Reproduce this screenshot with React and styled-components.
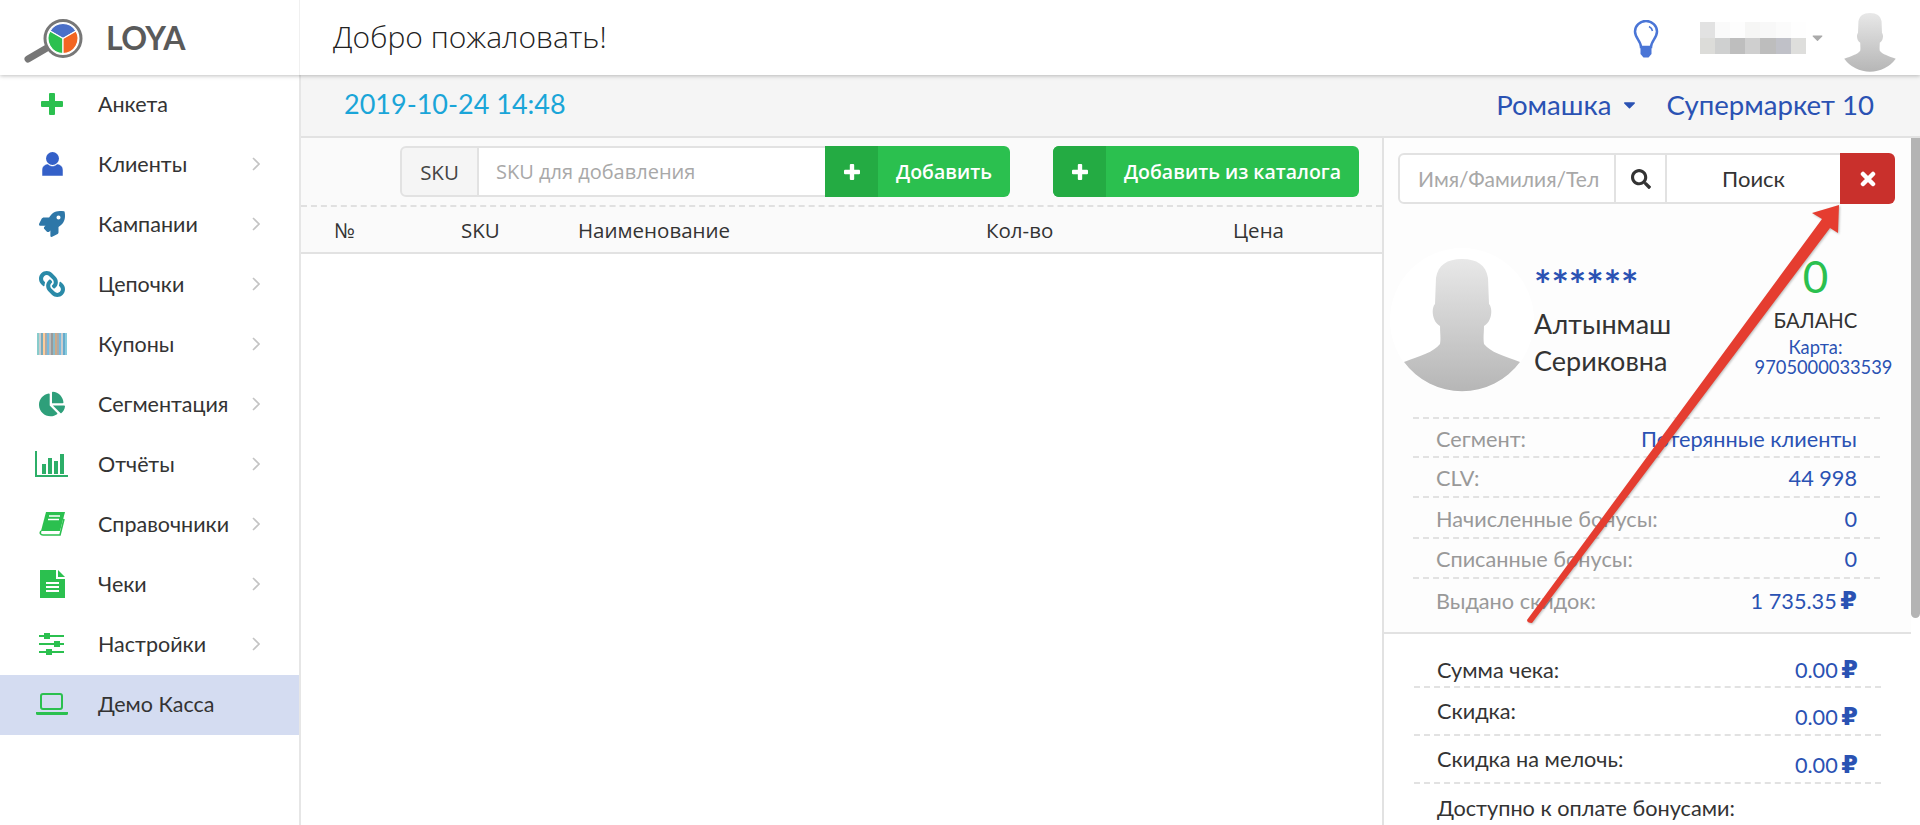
import styled, { createGlobalStyle } from 'styled-components'
import { FaRocket, FaLink, FaChartPie, FaSearch, FaCaretDown } from 'react-icons/fa'

const GlobalStyle = createGlobalStyle`
  html, body { margin: 0; padding: 0; height: 100%; background: #fff; }
  * { box-sizing: border-box; }
  body { font-family: Lato, "Noto Sans", sans-serif; color: #333; overflow: hidden; }
`

const Page = styled.div`
  position: relative;
  width: 1920px;
  height: 825px;
  overflow: hidden;
  display: flex;
  flex-direction: column;
`
const TopBar = styled.header`
  height: 75px;
  flex: none;
  display: flex;
  align-items: center;
  background: #fff;
  box-shadow: 0 1px 4px rgba(0,0,0,.25);
  position: relative;
  z-index: 2;
`
const LogoBox = styled.div`
  width: 300px;
  height: 100%;
  display: flex;
  align-items: center;
  padding-left: 24px;
  border-right: 1px solid #f0f0f0;
`
const LogoText = styled.span`
  margin-left: 22px;
  font-size: 32px;
  font-weight: 700;
  color: #5a5a5a;
  letter-spacing: -0.5px;
`
const Welcome = styled.h1`
  margin: 0 0 3px 33px;
  font: 300 30px "Open Sans", sans-serif;
  color: #222;
  flex: 1;
`
const Bulb = styled.svg`
  width: 26px;
  height: 38px;
  margin: 2px 41px 0 0;
`
const BlurName = styled.div`
  display: grid;
  grid-template-columns: repeat(7, 15.2px);
  grid-auto-rows: 16px;
`
const Pixel = styled.span`
  background: ${p => p.$c};
`
const UserCaret = styled(FaCaretDown)`
  color: #aaa;
  font-size: 17px;
  margin: 0 12px 0 3px;
`
const SmallAvatar = styled.svg`
  width: 64px;
  height: 64px;
  margin-right: 18px;
  margin-top: 4px;
`
const Body = styled.div`
  flex: 1;
  display: flex;
  min-height: 0;
`
const Sidebar = styled.nav`
  width: 301px;
  flex: none;
  border-right: 2px solid #e6e6e6;
  background: #fff;
`
const MenuItem = styled.div`
  height: 60px;
  display: flex;
  align-items: center;
  padding: 0 39px 2px 22px;
  font-size: 21.5px;
  color: #333;
  background: ${p => (p.$active ? '#d4dcf1' : 'transparent')};
`
const MenuIcon = styled.span`
  width: 60px;
  margin-right: 16px;
  display: flex;
  align-items: center;
  justify-content: center;
  color: ${p => p.$c};
  font-size: 26px;
`
const FlippedLink = styled(FaLink)`
  transform: scaleX(-1);
`
const Chevron = styled.svg`
  margin-left: auto;
  width: 8px;
  height: 14px;
  fill: none;
  stroke: #c4c4c4;
  stroke-width: 1.6;
`
const Main = styled.main`
  flex: 1;
  min-width: 0;
  display: flex;
  flex-direction: column;
`
const SubBar = styled.div`
  height: 63px;
  flex: none;
  display: flex;
  align-items: center;
  background: #f5f5f5;
  border-bottom: 2px solid #e2e2e2;
  padding: 0 46px 0 43px;
`
const DateText = styled.span`
  font-size: 27px;
  color: #1aa5d8;
  flex: 1;
  margin-bottom: 5px;
`
const ShopLink = styled.span`
  font-size: 27.6px;
  color: #2a52b3;
  display: flex;
  align-items: center;
  margin-left: ${p => p.$gap || 0}px;
  margin-bottom: 2px;
`
const ShopCaret = styled(FaCaretDown)`
  font-size: 19px;
  margin-left: 8px;
`
const Work = styled.div`
  flex: 1;
  min-height: 0;
  display: flex;
`
const Left = styled.section`
  width: 1081px;
  flex: none;
`
const Toolbar = styled.div`
  height: 69px;
  background: #fafafa;
  display: flex;
  align-items: flex-start;
  padding: 8px 0 0 99px;
  border-bottom: 2px dashed #e0e0e0;
`
const InputGroup = styled.div`
  display: flex;
  height: 51px;
`
const Addon = styled.div`
  width: 79px;
  display: flex;
  align-items: center;
  justify-content: center;
  background: #f5f5f5;
  border: 2px solid #e2e2e2;
  border-radius: 6px 0 0 6px;
  font: 400 20.5px "Open Sans", sans-serif;
  color: #444;
`
const SkuInput = styled.div`
  width: 346px;
  display: flex;
  align-items: center;
  padding-left: 17px;
  background: #fff;
  border-top: 2px solid #e2e2e2;
  border-bottom: 2px solid #e2e2e2;
  font: 400 20px "Open Sans", sans-serif;
  color: #a8a8a8;
`
const GreenBtn = styled.div`
  display: flex;
  height: 51px;
  width: ${p => p.$w}px;
  margin-left: ${p => p.$gap || 0}px;
  background: #2bc04f;
  color: #fff;
  font: 600 19.5px "Open Sans", sans-serif;
  border-radius: ${p => (p.$joined ? '0 6px 6px 0' : '6px')};
  overflow: hidden;
`
const BtnIcon = styled.span`
  width: 53px;
  background: #24ab43;
  display: flex;
  align-items: center;
  justify-content: center;
`
const BtnLabel = styled.span`
  flex: 1;
  display: flex;
  align-items: center;
  justify-content: center;
`
const TableHead = styled.div`
  height: 47px;
  background: #fafafa;
  border-bottom: 2px solid #e2e2e2;
  display: grid;
  grid-template-columns: 127px 117px 408px 247px 1fr;
  align-items: center;
  padding-left: 33px;
  font: 400 20.5px "Open Sans", sans-serif;
  color: #333;
`
const Right = styled.aside`
  flex: 1;
  min-width: 0;
  display: flex;
  border-left: 2px solid #e2e2e2;
`
const RightInner = styled.div`
  flex: 1;
  min-width: 0;
`
const Thumb = styled.div`
  width: 9px;
  height: 480px;
  flex: none;
  background: #b4b4b4;
  border-radius: 0 0 5px 5px;
`
const UpperPanel = styled.div`
  background: #fdfdfd;
  padding: 15px 16px 0 14px;
  height: 496px;
  border-bottom: 2px solid #e2e2e2;
`
const SearchRow = styled.div`
  display: flex;
  height: 51px;
`
const SearchInput = styled.div`
  width: 218px;
  display: flex;
  align-items: center;
  padding-left: 18px;
  border: 2px solid #e2e2e2;
  border-radius: 6px 0 0 6px;
  background: #fff;
  font-size: 21px;
  color: #a8a8a8;
  white-space: nowrap;
  overflow: hidden;
`
const SearchIconCell = styled.div`
  width: 51px;
  display: flex;
  align-items: center;
  justify-content: center;
  border: 2px solid #e2e2e2;
  border-left: 0;
  background: #fff;
  font-size: 20px;
  color: #333;
`
const SearchBtn = styled.div`
  width: 173px;
  display: flex;
  align-items: center;
  justify-content: center;
  border: 2px solid #e2e2e2;
  border-left: 0;
  border-right: 0;
  background: #fff;
  font-size: 22px;
  color: #333;
`
const CloseBtn = styled.div`
  width: 55px;
  display: flex;
  align-items: center;
  justify-content: center;
  background: #c9302c;
  color: #fff;
  border-radius: 0 6px 6px 0;
`
const Profile = styled.div`
  display: flex;
  margin: 44px 0 0 -8px;
  height: 169px;
`
const AvatarBig = styled.svg`
  width: 144px;
  height: 144px;
  flex: none;
`
const ProfileText = styled.div`
  width: 202px;
  padding-top: 16px;
`
const Stars = styled.div`
  font-size: 41px;
  line-height: 41px;
  font-weight: 700;
  color: #2a52b3;
  height: 41px;
`
const FullName = styled.div`
  font-size: 27px;
  line-height: 37px;
  color: #333;
`
const Balance = styled.div`
  flex: 1;
  display: flex;
  flex-direction: column;
  align-items: center;
  white-space: nowrap;
`
const BalanceValue = styled.div`
  font-size: 44px;
  line-height: 50px;
  color: #2bc04f;
  margin-top: 3px;
`
const BalanceLabel = styled.div`
  font-size: 20.3px;
  line-height: 30px;
  margin-top: 4px;
`
const CardText = styled.div`
  font-size: 18.3px;
  line-height: 19.5px;
  color: #2a52b3;
  text-align: center;
  margin-top: 3px;
`
const CardNumber = styled.span`
  display: block;
  padding-left: 16px;
`
const InfoRows = styled.div`
  margin: 0 ${p => p.$side}px;
`
const InfoRow = styled.div`
  height: ${p => p.$h || 40.5}px;
  display: flex;
  justify-content: space-between;
  align-items: center;
  padding: ${p => p.$pad ?? 3}px 23px 0 23px;
  border-top: ${p => (p.$first ? '2px dashed #e2e2e2' : '0')};
  border-bottom: ${p => (p.$last ? '0' : '2px dashed #e2e2e2')};
  font-size: 21.7px;
  color: ${p => (p.$dark ? '#333' : '#999')};
`
const Value = styled.span`
  color: #2a52b3;
  padding-top: ${p => p.$pt || 0}px;
`
const Ruble = styled.span`
  font-family: "DejaVu Sans", sans-serif;
  font-weight: 700;
  font-size: 24px;
  line-height: 1;
  margin-left: -2px;
`
const LowerPanel = styled.div`
  background: #fff;
  padding-top: 16px;
`
const Arrow = styled.svg`
  position: absolute;
  left: 0;
  top: 0;
  width: 1920px;
  height: 825px;
  pointer-events: none;
  z-index: 3;
  filter: drop-shadow(1px 1px 1px rgba(0,0,0,.25));
`

function PlusIcon({ size = 16, thick = 6 }) {
  const a = (size - (size * thick) / 22) / 2
  const w = (size * thick) / 22
  return (
    <svg width={size} height={size} viewBox={`0 0 ${size} ${size}`} fill="currentColor">
      <rect x={a} y="0" width={w} height={size} rx="1" />
      <rect x="0" y={a} width={size} height={w} rx="1" />
    </svg>
  )
}

const menu = [
  { label: 'Анкета', c: '#2bc04f', icon: <PlusIcon size={22} />, noArrow: true },
  {
    label: 'Клиенты',
    c: '#3460c8',
    icon: (
      <svg width="21" height="24" viewBox="0 0 21 24" fill="currentColor">
        <circle cx="10.500" cy="6.500" r="6.500" />
        <path d="M0 24v-6c0-3.500 3-6 6-6 1.500 1.500 3 2 4.500 2s3-.5 4.500-2c3 0 6 2.500 6 6v6z" stroke="#fff" strokeWidth="0.5" />
      </svg>
    ),
  },
  { label: 'Кампании', c: '#2e77a8', icon: <FaRocket /> },
  { label: 'Цепочки', c: '#2a8aa8', icon: <FlippedLink /> },
  {
    label: 'Купоны',
    icon: (
      <svg width="30" height="22" viewBox="0 0 30 22">
        {['#8cc', '#ccc', '#7ab', '#fc9', '#aaa', '#7bd', '#bbb', '#999', '#8bc', '#ca8', '#aaa', '#7bd', '#ccc', '#6ac', '#8cd'].map((col, i) => (
          <rect key={i} x={i * 2} width="2" height="22" fill={col} />
        ))}
      </svg>
    ),
  },
  { label: 'Сегментация', c: '#2e9f7a', icon: <FaChartPie /> },
  {
    label: 'Отчёты',
    c: '#2cae68',
    icon: (
      <svg width="34" height="26" viewBox="0 0 34 26" fill="currentColor">
        <rect x="0" width="2" height="26" />
        <rect x="0" y="24" width="33" height="2" />
        <rect x="7" y="13" width="4" height="10" />
        <rect x="13" y="7" width="4" height="16" />
        <rect x="19" y="10" width="4" height="13" />
        <rect x="25" y="3" width="4" height="20" />
      </svg>
    ),
  },
  {
    label: 'Справочники',
    c: '#2bc04f',
    icon: (
      <svg width="27" height="24" viewBox="0 0 27 24">
        <path d="M7 0h19l-5 19H2z" fill="currentColor" />
        <path d="M2 19c-1.500 2-.5 4 2 4h17l4-16" fill="none" stroke="currentColor" strokeWidth="1.600" />
        <path d="M10 4h11M9 7.500h11" stroke="#fff" strokeWidth="1.500" />
      </svg>
    ),
  },
  {
    label: 'Чеки',
    c: '#2bc04f',
    icon: (
      <svg width="25" height="28" viewBox="0 0 25 28" fill="currentColor">
        <path d="M0 0h16v9h9v19H0z" />
        <path d="M18 0l7 7h-7z" />
        <path d="M6 13h13M6 17h13M6 21h13" stroke="#fff" strokeWidth="2" />
      </svg>
    ),
  },
  {
    label: 'Настройки',
    c: '#2bc04f',
    icon: (
      <svg width="26" height="22" viewBox="0 0 26 22" fill="currentColor">
        <rect y="2" width="25" height="2" />
        <rect y="10" width="25" height="2" />
        <rect y="18" width="25" height="2" />
        <rect x="5" y="0" width="6" height="6" />
        <rect x="15" y="8" width="6" height="6" />
        <rect x="7" y="16" width="6" height="6" />
      </svg>
    ),
  },
  {
    label: 'Демо Касса',
    c: '#2bc04f',
    active: true,
    noArrow: true,
    icon: (
      <svg width="32" height="22" viewBox="0 0 32 22">
        <rect x="5" y="1" width="21" height="15" rx="2" fill="none" stroke="currentColor" strokeWidth="2" />
        <path d="M0 19h32v1.500a1.500 1.500 0 0 1-1.500 1.500h-29A1.500 1.500 0 0 1 0 20.500z" fill="currentColor" />
      </svg>
    ),
  },
]

const blurPixels = [
  '#e2e2e2', '#fafafa', '#fdfdfd', '#f6f6f5', '#f8f8f8', '#fbfbfb', '#fefefe',
  '#dcdcd9', '#cfd0d0', '#bebebe', '#cfcfcf', '#bdbdbd', '#c0c1c8', '#dededc',
]

const headPath =
  'M72 11C57 11 48 17 46 30L45 56C41 60 42 74 50 78C50 85 51 90 50 96C44 104 30 108 14 114A72 72 0 0 0 130 114C114 108 100 104 94 96C93 90 94 85 94 78C102 74 103 60 99 56L98 30C96 17 87 11 72 11Z'

function Silhouette({ id }) {
  return (
    <>
      <defs>
        <linearGradient id={id} x1="0" y1="0" x2="0" y2="1">
          <stop offset="0" stopColor="#e8e8e8" />
          <stop offset="1" stopColor="#b6b6b6" />
        </linearGradient>
      </defs>
      <path d={headPath} fill={`url(#${id})`} />
    </>
  )
}

function App() {
  return (
    <Page>
      <GlobalStyle />
      <TopBar>
        <LogoBox>
          <svg width="60" height="50" viewBox="0 0 60 50">
            <path d="M4 46L22 35.500" stroke="#777" strokeWidth="7" strokeLinecap="round" />
            <circle cx="39" cy="25.500" r="18" fill="#fff" stroke="#777" strokeWidth="3" />
            <g stroke="#fff" strokeWidth="1.200">
              <path d="M39 25.500L26 18A15 15 0 0 1 52 18Z" fill="#4a6fc8" />
              <path d="M39 25.500L26 18A15 15 0 0 0 39 40.500Z" fill="#2bc04f" />
              <path d="M39 25.500L52 18A15 15 0 0 1 39 40.500Z" fill="#f26522" />
            </g>
          </svg>
          <LogoText>LOYA</LogoText>
        </LogoBox>
        <Welcome>Добро пожаловать!</Welcome>
        <Bulb viewBox="0 0 26 38">
          <path d="M8 27C8 21 2 18 2 11.500A11 10.500 0 0 1 24 11.500C24 18 18 21 18 27Z" fill="#fff" stroke="#4a75d6" strokeWidth="2.500" />
          <path d="M16 6.500C18 7.500 19 9 19.500 11" fill="none" stroke="#4a75d6" strokeWidth="1.500" />
          <path d="M7.500 27h11v7l-3 3.500h-5l-3-3.500z" fill="#4a75d6" />
        </Bulb>
        <BlurName>
          {blurPixels.map((c, i) => (
            <Pixel key={i} $c={c} />
          ))}
        </BlurName>
        <UserCaret />
        <SmallAvatar viewBox="0 0 144 144">
          <Silhouette id="small-head" />
        </SmallAvatar>
      </TopBar>
      <Body>
        <Sidebar>
          {menu.map(item => (
            <MenuItem key={item.label} $active={item.active}>
              <MenuIcon $c={item.c}>{item.icon}</MenuIcon>
              {item.label}
              {!item.noArrow && (
                <Chevron viewBox="0 0 8 14">
                  <path d="M1 1l6 6-6 6" />
                </Chevron>
              )}
            </MenuItem>
          ))}
        </Sidebar>
        <Main>
          <SubBar>
            <DateText>2019-10-24 14:48</DateText>
            <ShopLink>Ромашка<ShopCaret /></ShopLink>
            <ShopLink $gap={28}>Супермаркет 10</ShopLink>
          </SubBar>
          <Work>
            <Left>
              <Toolbar>
                <InputGroup>
                  <Addon>SKU</Addon>
                  <SkuInput>SKU для добавления</SkuInput>
                  <GreenBtn $w={185} $joined>
                    <BtnIcon><PlusIcon /></BtnIcon>
                    <BtnLabel>Добавить</BtnLabel>
                  </GreenBtn>
                </InputGroup>
                <GreenBtn $w={306} $gap={43}>
                  <BtnIcon><PlusIcon /></BtnIcon>
                  <BtnLabel>Добавить из каталога</BtnLabel>
                </GreenBtn>
              </Toolbar>
              <TableHead>
                <span>№</span>
                <span>SKU</span>
                <span>Наименование</span>
                <span>Кол-во</span>
                <span>Цена</span>
              </TableHead>
            </Left>
            <Right>
              <RightInner>
                <UpperPanel>
                  <SearchRow>
                    <SearchInput>Имя/Фамилия/Тел</SearchInput>
                    <SearchIconCell><FaSearch /></SearchIconCell>
                    <SearchBtn>Поиск</SearchBtn>
                    <CloseBtn>
                      <svg width="16" height="16" viewBox="0 0 16 16">
                        <path d="M3 3l10 10M13 3L3 13" stroke="#fff" strokeWidth="4.500" strokeLinecap="round" />
                      </svg>
                    </CloseBtn>
                  </SearchRow>
                  <Profile>
                    <AvatarBig viewBox="0 0 144 144">
                      <circle cx="72" cy="72" r="72" fill="#fff" />
                      <Silhouette id="big-head" />
                    </AvatarBig>
                    <ProfileText>
                      <Stars>******</Stars>
                      <FullName>Алтынмаш<br />Сериковна</FullName>
                    </ProfileText>
                    <Balance>
                      <BalanceValue>0</BalanceValue>
                      <BalanceLabel>БАЛАНС</BalanceLabel>
                      <CardText>Карта:<CardNumber>9705000033539</CardNumber></CardText>
                    </Balance>
                  </Profile>
                  <InfoRows $side={15}>
                    <InfoRow $first><span>Сегмент:</span><Value>Потерянные клиенты</Value></InfoRow>
                    <InfoRow><span>CLV:</span><Value>44 998</Value></InfoRow>
                    <InfoRow><span>Начисленные бонусы:</span><Value>0</Value></InfoRow>
                    <InfoRow><span>Списанные бонусы:</span><Value>0</Value></InfoRow>
                    <InfoRow $last><span>Выдано скидок:</span><Value>1 735.35 <Ruble>₽</Ruble></Value></InfoRow>
                  </InfoRows>
                </UpperPanel>
                <LowerPanel>
                  <InfoRows $side={30}>
                    <InfoRow $dark $h={38}><span>Сумма чека:</span><Value>0.00 <Ruble>₽</Ruble></Value></InfoRow>
                    <InfoRow $dark $pad={0} $h={48}><span>Скидка:</span><Value $pt={12}>0.00 <Ruble>₽</Ruble></Value></InfoRow>
                    <InfoRow $dark $pad={0} $h={48}><span>Скидка на мелочь:</span><Value $pt={12}>0.00 <Ruble>₽</Ruble></Value></InfoRow>
                    <InfoRow $dark $pad={0} $last $h={48}><span>Доступно к оплате бонусами:</span></InfoRow>
                  </InfoRows>
                </LowerPanel>
              </RightInner>
              <Thumb />
            </Right>
          </Work>
        </Main>
      </Body>
      <Arrow viewBox="0 0 1920 825">
        <path d="M1839 205L1812 213L1822 219L1527 620Q1527 623 1532 623L1830 228L1838 233Z" fill="#e53d30" />
      </Arrow>
    </Page>
  )
}

export default App
